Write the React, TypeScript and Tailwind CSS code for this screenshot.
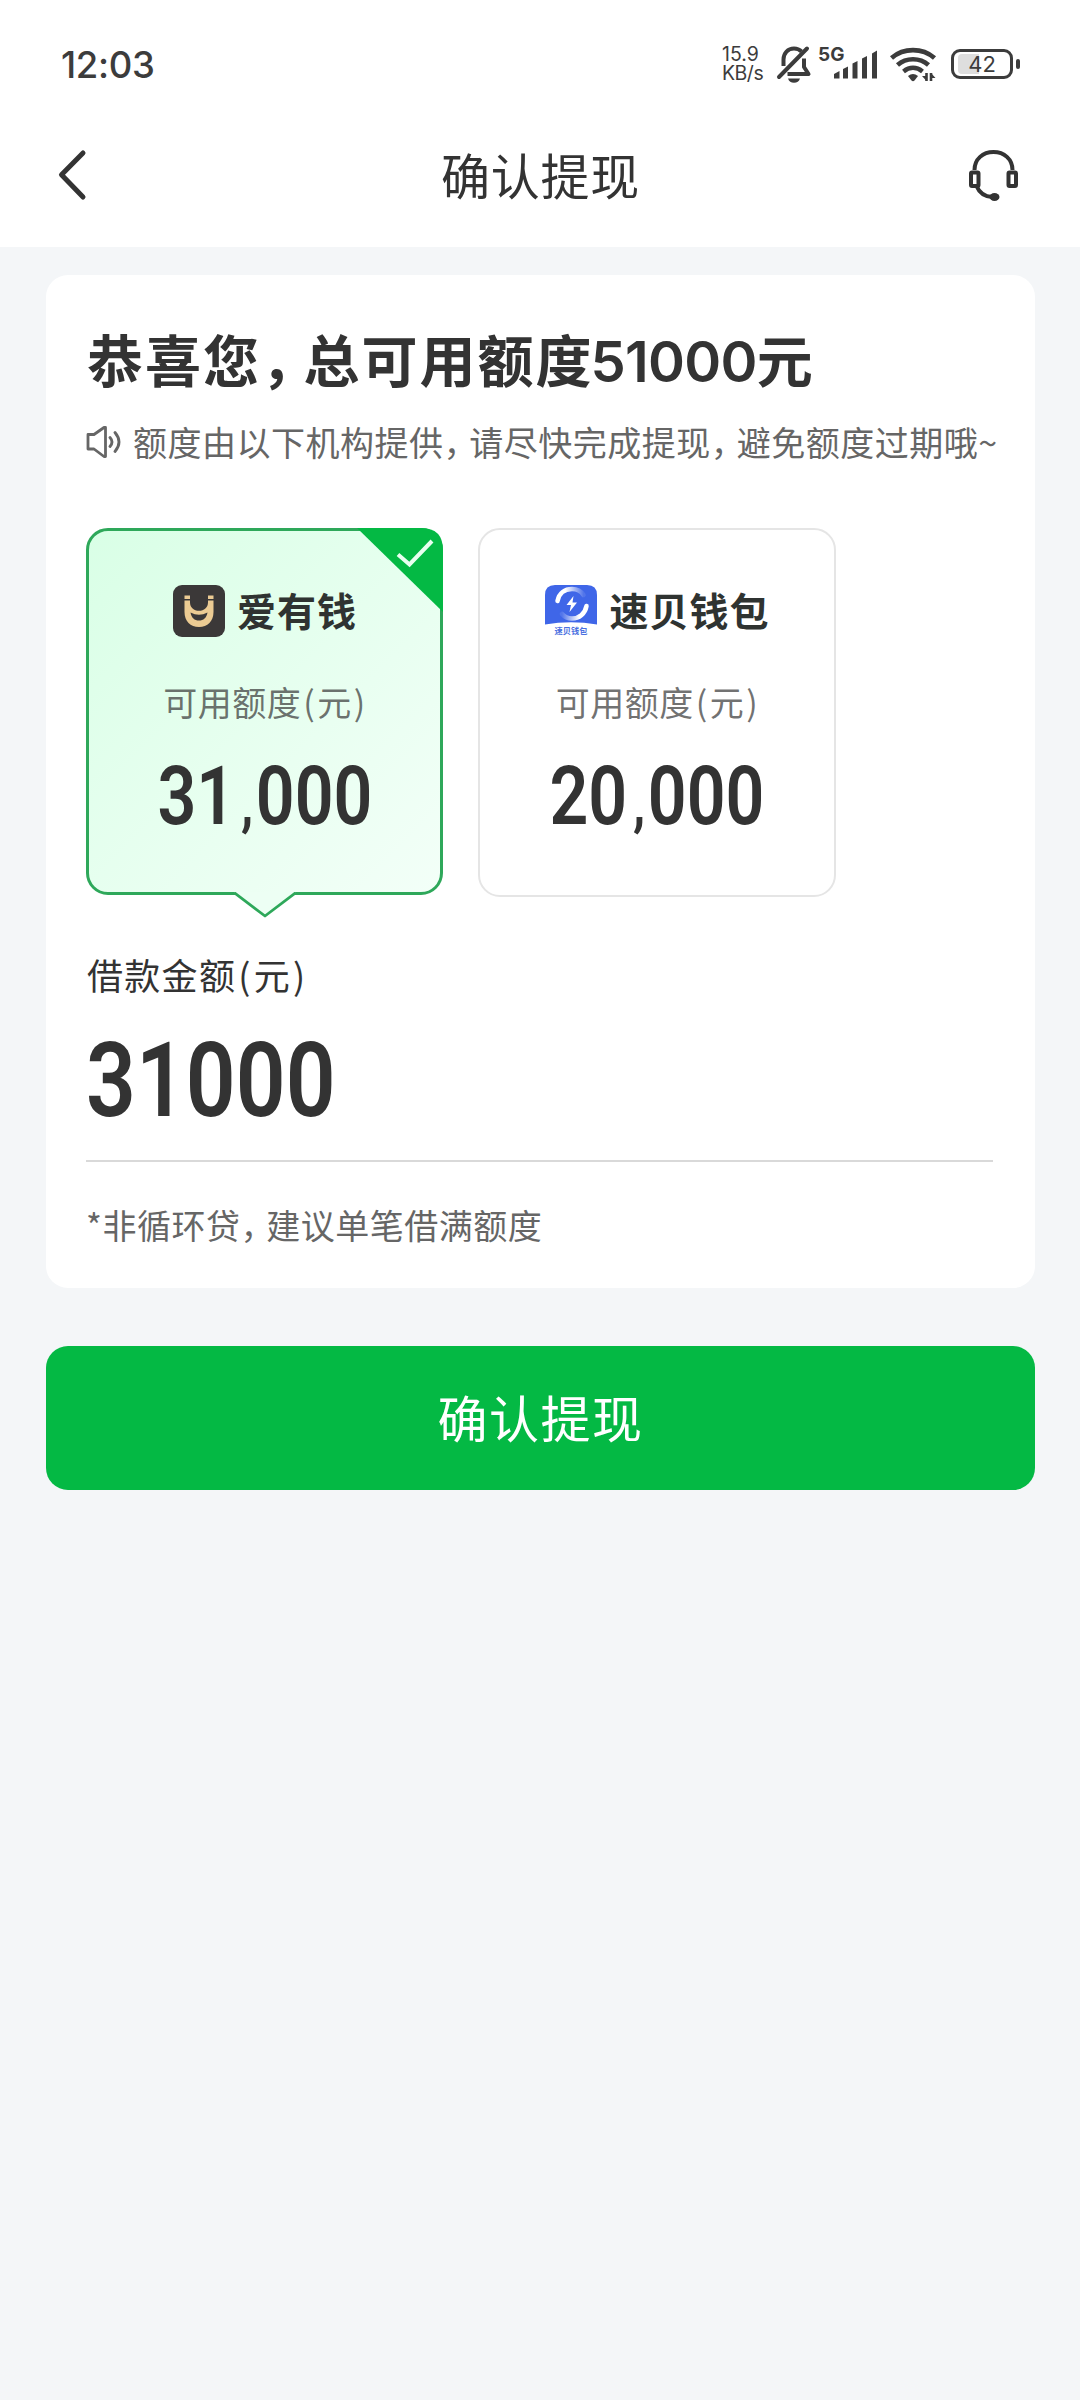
import { ReactElement } from "react";

type Lender = {
  id: string;
  name: string;
  amount: [string, string];
  logo: ReactElement;
};

function AiYouQianLogo() {
  return (
    <svg width="52" height="52" viewBox="0 0 52 52" className="shrink-0">
      <rect width="52" height="52" rx="9" fill="#3b3838" />
      <path
        d="M11.5 15.5h5.5V17.500c0 5 4 8.300 9 8.300s9-3.300 9-8.300v-2h5.500V27c0 9-6 15-14.500 15s-14.500-6-14.500-15z"
        fill="#eccb93"
      />
      <path d="M11.500 10.500h5.500v3.500h-5.500zM35 10.500h5.500v3.500H35z" fill="#eccb93" />
      <path d="M17.500 27.500q8.500 4.500 17 0c-1 5.500-4 8-8.500 8s-7.500-2.500-8.500-8z" fill="#3b3838" />
    </svg>
  );
}

function SuBeiLogo() {
  return (
    <svg width="52" height="52" viewBox="0 0 52 52" className="shrink-0">
      <defs>
        <linearGradient id="arcTop" x1="0" y1="0" x2="1" y2="0">
          <stop offset="0.3" stopColor="#fff" />
          <stop offset="1" stopColor="#fff" stopOpacity="0.1" />
        </linearGradient>
        <linearGradient id="arcBottom" x1="1" y1="0" x2="0" y2="0">
          <stop offset="0.3" stopColor="#fff" />
          <stop offset="1" stopColor="#fff" stopOpacity="0.1" />
        </linearGradient>
      </defs>
      <path d="M0 10Q0 0 10 0h32q10 0 10 10v29.500Q26 35 0 39.500z" fill="#3f66e8" />
      <path d="M12.500 16C14 8 20 4 27 4c5 0 9 2 11.500 6" fill="none" stroke="url(#arcTop)" strokeWidth="4.500" strokeLinecap="round" />
      <path d="M41.500 21C40 29 34 33.500 27 33.500c-4 0-7.500-1.500-10-4.500" fill="none" stroke="url(#arcBottom)" strokeWidth="4.500" strokeLinecap="round" />
      <path d="M28.500 11 21.500 20h4.500l-1.500 7 7.500-9.500h-4.500z" fill="#fff" />
      <text x="26" y="48.500" textAnchor="middle" fontSize="8.200" fontWeight="700" fill="#4a6fe0">
        速贝钱包
      </text>
    </svg>
  );
}

const lenders: Lender[] = [
  { id: "aiyouqian", name: "爱有钱", amount: ["31", "000"], logo: <AiYouQianLogo /> },
  { id: "subei", name: "速贝钱包", amount: ["20", "000"], logo: <SuBeiLogo /> },
];

// full-width comma with its right side tightened
function Comma() {
  return <span className="tracking-[-0.24em]">，</span>;
}

function StatusBar() {
  return (
    <div className="flex h-[100px] items-start justify-between pl-[61px] pr-[60px] text-[#3c3c3c]">
      <span className="mt-[43px] font-['Inter',sans-serif] text-[36.5px] leading-[44px] font-medium tracking-[-0.3px]">
        12:03
      </span>
      <div className="mt-[44px] flex items-start">
        <div className="flex w-[54px] flex-col font-['Inter',sans-serif] text-[19.5px] leading-none">
          <span className="h-[20px] leading-[20px]">15.9</span>
          <span className="h-[19px] leading-[19px] tracking-[-0.5px]">KB/s</span>
        </div>
        {/* Muted bell */}
        <svg width="36" height="40" viewBox="0 0 36 40" fill="none" stroke="#3c3c3c" strokeWidth="4">
          <path d="M7.500 22v-6.500C7.500 9 12 4.500 18 4.500c3 0 5.500 1 7.500 3" />
          <path d="M28 14.500V23l4.500 7H11.500" strokeLinejoin="round" />
          <path d="M31 4.500 3 33" strokeLinecap="round" />
          <path d="M12 34.500h12c-1 3-3 4.200-6 4.200s-5-1.200-6-4.200z" fill="#3c3c3c" stroke="none" />
        </svg>
        <div className="relative ml-[8px] h-[40px] w-[60px]">
          <span className="absolute top-[1px] -left-[2px] font-['Inter',sans-serif] text-[19px] leading-[20px] font-bold">
            5G
          </span>
          <svg width="60" height="40" viewBox="0 0 60 40" fill="#3c3c3c">
            <path d="M14 34.500v-4.500l5.500-3v7.500zM23 34.500V25l5-2.500v12zM32.500 34.500V19.500l5-2.500v17.500zM42 34.500v-20l5-2.500v22.500zM52 34.500V9.500l5-3v28z" />
          </svg>
        </div>
        {/* Wifi */}
        <svg width="48" height="40" viewBox="0 0 48 40" className="ml-[10px]" fill="none" stroke="#3c3c3c">
          <path d="M1.500 14C8 8.500 15 6.200 23 6.200S38 8.500 44.500 14" strokeWidth="4.800" />
          <path d="M7.500 21c4.500-4 10-5.800 15.500-5.800s11 1.800 15.500 5.800" strokeWidth="4.600" />
          <path d="M13.500 27.500c3-2.500 6-3.700 9.500-3.700s6.500 1.200 9.500 3.700" strokeWidth="4.400" />
          <path d="M18 32q5-4 10 0l-3.500 4.500q-1.500 1.500-3 0z" fill="#3c3c3c" stroke="none" />
          <path d="M36.500 29v8M41 37v-8" strokeWidth="2.600" />
          <path d="M36.500 37 32 32h4.500zM41 29l4.500 5H41z" fill="#3c3c3c" stroke="none" />
        </svg>
        {/* Battery */}
        <div className="mt-[5px] ml-[13px] flex items-center gap-[3px]">
          <div className="relative flex h-[30px] w-[62px] items-center justify-center rounded-[9px] border-[3px] border-[#3c3c3c]">
            <div className="absolute top-[2px] left-[4px] h-[20px] w-[21px] rounded-l-[4px] bg-[#dedede]" />
            <span className="relative font-['Inter',sans-serif] text-[22px] leading-[22px]">42</span>
          </div>
          <div className="h-[10px] w-[4px] rounded-full bg-[#3c3c3c]" />
        </div>
      </div>
    </div>
  );
}

function NavBar() {
  return (
    <div className="flex h-[147px] items-start justify-between pl-[56px] pr-[59px]">
      <svg width="52" height="56" viewBox="0 0 52 56" className="mt-[47px]" fill="none">
        <path d="M27 6 5.500 27.700 27 50" stroke="#333" strokeWidth="5" strokeLinecap="round" strokeLinejoin="round" />
      </svg>
      <h1 className="mt-[42px] ml-[6px] text-[49px] leading-[64px] tracking-[0.8px] text-[#333]">确认提现</h1>
      <svg width="54" height="56" viewBox="0 0 54 56" className="mt-[48px]" fill="none" stroke="#333" strokeWidth="4">
        <path d="M7.500 22C7.500 11 16 4 26.500 4s19 7 19 18" />
        <rect x="4" y="24.500" width="7.500" height="13.500" rx="1" />
        <rect x="41.500" y="24.500" width="7.500" height="13.500" rx="1" />
        <path d="M9.500 38c2.500 6 8 10.500 15.500 11" />
        <ellipse cx="27.500" cy="49" rx="5" ry="4" fill="#333" stroke="none" />
      </svg>
    </div>
  );
}

function LenderCard({ lender, selected }: { lender: Lender; selected: boolean }) {
  return (
    <div
      className={`relative flex flex-col items-center rounded-[22px] ${
        selected
          ? "h-[367px] w-[357px] border-[3px] border-[#2ea85a] bg-linear-to-br from-[#d9ffe6] to-[#f3fff8] pt-[54px]"
          : "h-[369px] w-[358px] border-2 border-[#e5e5e5] bg-white pt-[55px]"
      }`}
    >
      <div className="flex h-[52px] items-start gap-[12px] pl-[1px]">
        {lender.logo}
        <span className="-mt-[2px] text-[39px] leading-[52px] font-bold tracking-[1px] text-[#2f3331]">
          {lender.name}
        </span>
      </div>
      <div className="mt-[41px] pl-[2px] text-[34px] leading-[48px] tracking-[0.5px] text-[#333]/70">
        可用额度<span className="px-[2px]">(</span>元<span className="px-[2px]">)</span>
      </div>
      <div className="mt-[31px] h-[80px] scale-x-[0.84] font-['Roboto',sans-serif] text-[81px] leading-[80px] font-semibold text-[#333]">
        {lender.amount[0]}
        <span className="pr-[3px] pl-[7px] text-[62px] leading-none">,</span>
        {lender.amount[1]}
      </div>
      {selected && (
        <>
          <svg width="86" height="84" viewBox="0 0 86 84" className="absolute -top-[3px] -right-[3px]">
            <path d="M0 0h64q22 0 22 22v62z" fill="#04b944" />
            <path d="M41 26.500 52.500 36.500 75 13" fill="none" stroke="#e9fff0" strokeWidth="4" />
          </svg>
          {/* Pointer to the amount below */}
          <svg width="62" height="26" viewBox="0 0 62 26" className="absolute -bottom-[26px] left-[145px]">
            <path d="M0 0h62v1L31 23 0 1z" fill="#edfff4" />
            <path d="M0 0.500 31 24 62 0.500" fill="none" stroke="#2ea85a" strokeWidth="2.800" strokeLinejoin="round" />
          </svg>
        </>
      )}
    </div>
  );
}

export default function App() {
  return (
    <div className="min-h-[2400px] w-[1080px] bg-[#f4f6f8] font-['Noto_Sans_CJK_SC',sans-serif]">
      <header className="bg-white">
        <StatusBar />
        <NavBar />
      </header>

      <main className="pt-[28px] pr-[45px] pl-[46px]">
        <section className="rounded-[22px] bg-white pt-[48px] pr-[42px] pb-[40px] pl-[40px]">
          <h2 className="h-[70px] pl-px text-[56px] leading-[70px] font-bold tracking-[2px] whitespace-nowrap text-[#333]">
            恭喜您
            <Comma />
            总可用额度
            <span className="-ml-[3px] font-['Inter',sans-serif] leading-none font-semibold tracking-[-0.7px]">51000</span>元
          </h2>

          <div className="mt-[24px] flex h-[50px] items-center">
            <svg width="36" height="34" viewBox="0 0 36 34" className="shrink-0" fill="none" stroke="#666" strokeWidth="2.800">
              <path d="M2 9.500h6L18 2.500h1.500v29H18L8 24H2z" strokeLinejoin="round" />
              <path d="M24 12.500q4 4.500 0 9M29 7.500q8 9.500 0 19" strokeLinecap="round" />
            </svg>
            <p className="ml-[11px] h-[48px] text-[34px] leading-[48px] tracking-[0.5px] whitespace-nowrap text-[#666]">
              额度由以下机构提供
              <Comma />
              请尽快完成提现
              <Comma />
              避免额度过期哦~
            </p>
          </div>

          <div className="mt-[61px] flex h-[369px] gap-[35px]">
            {lenders.map((lender, i) => (
              <LenderCard key={lender.id} lender={lender} selected={i === 0} />
            ))}
          </div>

          <div className="mt-[52px] pl-px text-[36px] leading-[50px] tracking-[1.3px] text-[#333]">
            借款金额<span className="px-[2px]">(</span>元<span className="px-[2px]">)</span>
          </div>
          <div className="mt-[32px] origin-left scale-x-[0.84] font-['Roboto',sans-serif] text-[104px] leading-[100px] font-semibold text-[#333]">
            31000
          </div>
          <div className="mt-[29px] h-[2px] bg-[#d9d9d9]" />
          <p className="mt-[39px] h-[47px] text-[34px] leading-[48px] tracking-[0.5px] text-[#666]">
            *非循环贷
            <Comma />
            建议单笔借满额度
          </p>
        </section>

        <button className="mt-[58px] flex h-[144px] w-full items-center justify-center rounded-[22px] bg-[#04b944] pb-[5px] text-[50px] leading-[64px] tracking-[1.5px] text-white">
          确认提现
        </button>
      </main>
    </div>
  );
}
